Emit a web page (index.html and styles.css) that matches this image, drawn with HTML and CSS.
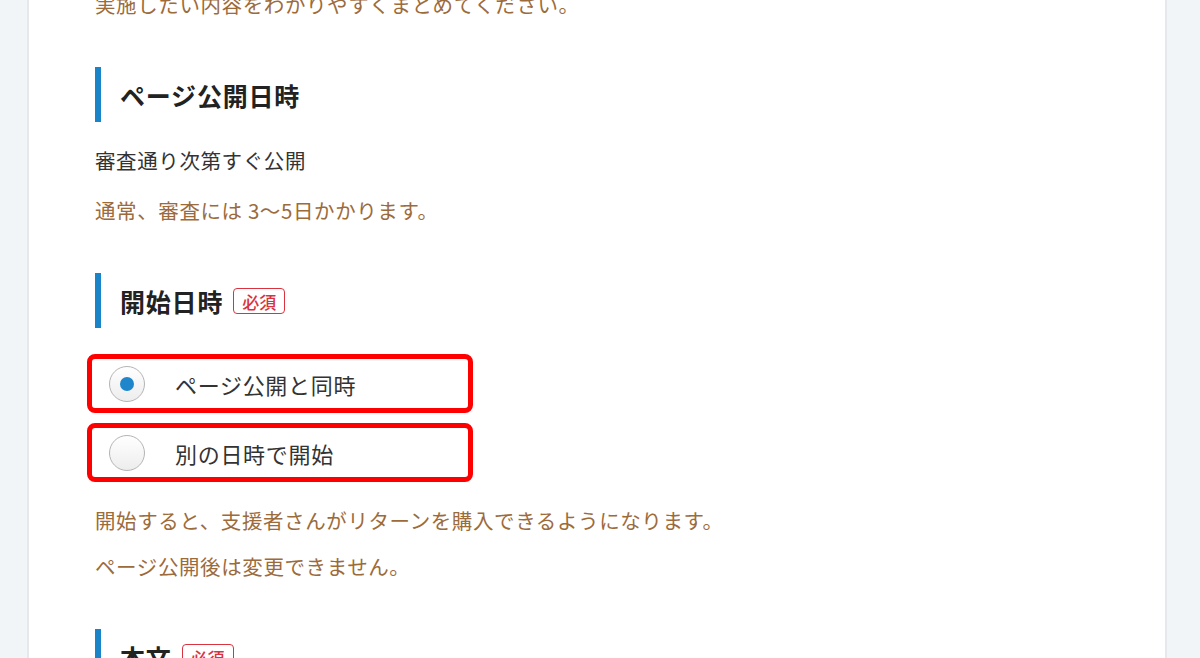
FILE: index.html
```html
<!DOCTYPE html>
<html lang="ja">
<head>
    <meta charset="UTF-8">
    <meta name="viewport" content="width=device-width, initial-scale=1.0">
    <title>リターン設定</title>
    <link rel="stylesheet" href="styles.css">
</head>
<body>
    <div class="form-card">
        <p class="note">実施したい内容をわかりやすくまとめてください。</p>

        <!-- ページ公開日時 -->
        <div class="form-section">
            <h2 class="section-heading">ページ公開日時</h2>
            <p class="plain-text">審査通り次第すぐ公開</p>
            <p class="note">通常、審査には 3〜5日かかります。</p>
        </div>

        <!-- 開始日時 -->
        <div class="form-section">
            <h2 class="section-heading">開始日時<span class="required">必須</span></h2>
            <div class="radio-list">
                <label class="radio-row">
                    <input type="radio" name="start" class="radio-input" checked>
                    <span class="radio-mark"></span>
                    <span class="radio-label">ページ公開と同時</span>
                </label>
                <label class="radio-row">
                    <input type="radio" name="start" class="radio-input">
                    <span class="radio-mark"></span>
                    <span class="radio-label">別の日時で開始</span>
                </label>
            </div>
            <p class="note">開始すると、支援者さんがリターンを購入できるようになります。</p>
            <p class="note note-tight">ページ公開後は変更できません。</p>
        </div>

        <!-- 本文 -->
        <div class="form-section">
            <h2 class="section-heading">本文<span class="required">必須</span></h2>
        </div>
    </div>
</body>
</html>
```

FILE: styles.css
```css
body {
    font-family: "Noto Sans CJK JP", "Noto Sans", sans-serif;
    margin: 0;
    padding: 0;
    background-color: #f2f5f8;
    color: #333;
    overflow: hidden;
}
.form-card {
    width: 1140px;
    margin: -11px 0 0 27px;
    padding: 0 0 40px 66px;
    box-sizing: border-box;
    background-color: #fff;
    border-left: 2px solid #e6e8eb;
    border-right: 2px solid #e6e8eb;
    min-height: 720px;
}
p {
    margin: 0;
    font-size: 20.5px;
    line-height: 30px;
    letter-spacing: 0.6px;
}
.note {
    color: #9c6b3c;
}
.plain-text {
    color: #333;
    margin: 23px 0 20px;
}
/* Section headings with the blue bar */
.form-section {
    margin-top: 48px;
}
.section-heading {
    display: flex;
    align-items: center;
    height: 55px;
    margin: 0;
    padding-left: 19px;
    border-left: 6px solid #1a84c8;
    font-size: 25px;
    font-weight: bold;
    letter-spacing: 0.8px;
    color: #222;
}
.required {
    display: inline-block;
    margin-left: 10px;
    padding: 0 8px;
    height: 26px;
    line-height: 25px;
    box-sizing: border-box;
    border: 1.5px solid #d9333f;
    border-radius: 4px;
    font-size: 17px;
    font-weight: 500;
    letter-spacing: 0;
    color: #d9333f;
}
/* Radio options (highlighted in red) */
.radio-list {
    display: flex;
    flex-direction: column;
    gap: 10px;
    margin: 26px 0 23px -8px;
}
.radio-row {
    display: flex;
    align-items: center;
    width: 386px;
    height: 59px;
    box-sizing: border-box;
    padding-left: 17px;
    border: 5px solid #ff0000;
    border-radius: 8px;
    cursor: pointer;
}
.radio-input {
    display: none;
}
.radio-mark {
    position: relative;
    width: 36px;
    height: 36px;
    box-sizing: border-box;
    border: 1px solid #b4b4b4;
    border-radius: 50%;
    background: linear-gradient(#ffffff, #ededed);
}
.radio-input:checked + .radio-mark::after {
    content: "";
    position: absolute;
    top: 10px;
    left: 10px;
    width: 14px;
    height: 14px;
    border-radius: 50%;
    background-color: #1f86cb;
}
.radio-label {
    margin-left: 30px;
    font-size: 22px;
    letter-spacing: 0.7px;
    color: #333;
}
.note-tight {
    margin-top: 16px;
}
```
